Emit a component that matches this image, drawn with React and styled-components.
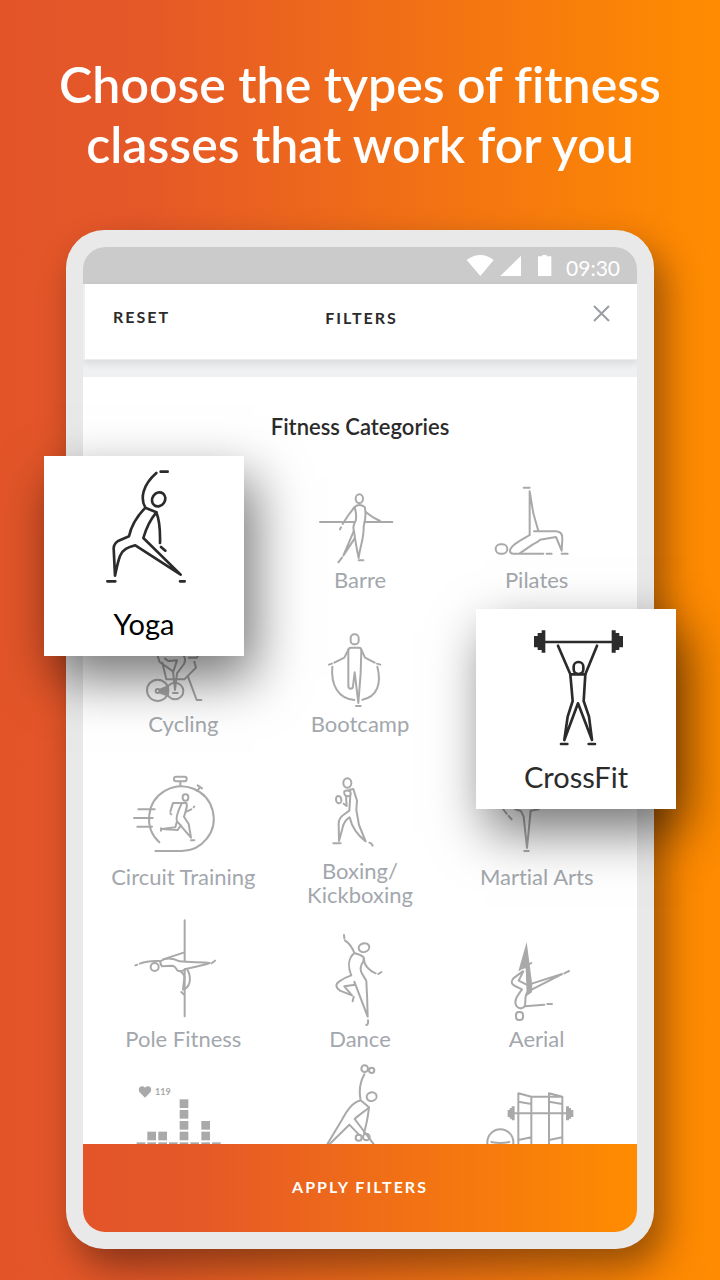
import React from "react";
import styled, { createGlobalStyle } from "styled-components";

const gradient = "linear-gradient(90deg, #e35529 0%, #e55828 20%, #ff8c00 100%)";

const GlobalStyle = createGlobalStyle`
  *, *::before, *::after { box-sizing: border-box; }
  body {
    margin: 0;
    font-family: Lato, "Liberation Sans", sans-serif;
    font-variant-ligatures: none;
  }
  button {
    margin: 0;
    padding: 0;
    border: 0;
    background: none;
    color: inherit;
    font: inherit;
    cursor: pointer;
  }
`;

const Page = styled.main`
  min-height: 100vh;
  padding: 54px 66px 31px;
  background: ${gradient};
  overflow: hidden;
`;

const Headline = styled.h1`
  margin: 0 -40px 56px;
  color: #fff;
  font-size: 50px;
  font-weight: 600;
  line-height: 60px;
  text-align: center;
`;

const Phone = styled.div`
  position: relative;
  padding: 17px;
  border-radius: 38px;
  background: #e9e9e9;
  box-shadow: 10px 18px 36px rgba(0, 0, 0, 0.4);
`;

const Screen = styled.div`
  overflow: hidden;
  border-radius: 22px;
  background: #fff;
`;

const StatusBar = styled.div`
  display: flex;
  align-items: center;
  justify-content: flex-end;
  gap: 14px;
  height: 37px;
  padding: 0 17px;
  background: #cbcbcb;
  color: #fff;
  font-size: 21px;
  line-height: 24px;
`;

const StatusTime = styled.time`
  padding-top: 4px;
`;

const NavBar = styled.header`
  position: relative;
  display: grid;
  grid-template-columns: 1fr auto 1fr;
  align-items: center;
  height: 76px;
  padding: 0 27px 10px 28px;
  border-left: 2px solid #efefef;
  border-bottom: 1px solid #ececec;
  background: #fff;
  box-shadow: 0 3px 8px rgba(0, 0, 0, 0.1);
  color: #2b2b2b;
`;

const NavTitle = styled.h2`
  margin: 0;
  padding-top: 2px;
  font-size: 16px;
  font-weight: 700;
  letter-spacing: 2px;
`;

const ResetButton = styled.button`
  justify-self: start;
  font-size: 16px;
  font-weight: 700;
  letter-spacing: 2px;
`;

const CloseButton = styled.button`
  justify-self: end;
  display: flex;
  padding-bottom: 6px;
`;

const Categories = styled.section`
  border-top: 17px solid #eff0f2;
  padding: 37px 12px 0;
`;

const SectionTitle = styled.h3`
  margin: 0 0 20px;
  color: #2b2b2b;
  font-size: 22px;
  font-weight: 600;
  line-height: 26px;
  text-align: center;
`;

const Grid = styled.div`
  display: grid;
  grid-template-columns: repeat(3, 1fr);
  row-gap: 12px;
  align-items: start;
`;

const Tile = styled.button`
  grid-column: ${(p) => p.$column};
  display: flex;
  flex-direction: column;
  align-items: center;
  color: #a3a7ad;
  font-size: 22px;
  line-height: 24px;
  white-space: pre-line;
`;

const Drawing = styled.svg`
  display: block;
  fill: none;
  stroke: ${(p) => (p.$dark ? "#2b2b2b" : "#a9a9a9")};
  stroke-width: ${(p) => (p.$dark ? 8 : 6)};
  stroke-linecap: round;
  stroke-linejoin: round;

  .solid {
    fill: ${(p) => (p.$dark ? "#2b2b2b" : "#a9a9a9")};
    stroke: none;
  }
`;

const ApplyButton = styled.button`
  display: block;
  width: 100%;
  height: 88px;
  padding-bottom: 4px;
  background: ${gradient};
  color: #fff;
  font-size: 16px;
  font-weight: 700;
  letter-spacing: 2px;
`;

const FeaturedCard = styled.button`
  position: absolute;
  top: ${(p) => p.$top}px;
  ${(p) => p.$side}: -22px;
  display: flex;
  flex-direction: column;
  align-items: center;
  width: 200px;
  height: 200px;
  background: #fff;
  box-shadow: 10px 22px 50px rgba(0, 0, 0, 0.55);
  color: ${(p) => p.$ink};
  font-size: 29px;
  line-height: 36px;
`;

const categories = [
  {
    name: "Barre",
    column: 2,
    box: "-84 -30",
    height: 108,
    art: (
      <>
        <ellipse cx="178" cy="86" rx="11" ry="13" />
        <path d="M60 156H162M193 156H277" />
        <path d="M164 111Q178 99 194 111C199 130 195 155 191 170C192 205 180 230 176 264C171 240 166 215 163 190C158 172 160 166 167 152C171 138 168 126 164 111Q146 132 128 162M123 172L120 178" />
        <path d="M197 126Q216 142 240 153M162 182L130 257L164 205M126 263L115 277M176 271H190" />
      </>
    ),
  },
  {
    name: "Pilates",
    column: 3,
    box: "-33 -30",
    height: 108,
    art: (
      <>
        <rect x="107" y="223" width="35" height="28" rx="14" />
        <path d="M209 195V64L220 130L235 183M191 53H209" />
        <path d="M209 195C182 211 151 226 150 243Q150 251 160 251H250M222 184H288Q308 185 307 206L305 242L288 201L240 209L235 214C210 226 196 240 180 249" />
        <path d="M260 251H275M305 251H323" />
      </>
    ),
  },
  {
    name: "Cycling",
    column: 1,
    box: "16 -138",
    height: 108,
    art: (
      <>
        <circle cx="204" cy="121" r="32" />
        <circle cx="256" cy="123" r="25" />
        <circle cx="204" cy="123" r="6" />
        <path className="solid" d="M207 117L238 105V141L207 130Z" />
        <path d="M218 38L230 88H284L319 53L314 35M295 80L321 150H335" />
        <path d="M204 18L210 36L250 64L256 120L262 70L283 42Q290 25 281 16M226 26L236 33L262 31L252 62M250 129H264M298 23H322L326 14" />
      </>
    ),
  },
  {
    name: "Bootcamp",
    column: 2,
    box: "-84 402",
    height: 108,
    art: (
      <>
        <rect x="152" y="493" width="24" height="30" rx="11" />
        <path d="M184 540Q184 533 176 533H153Q145 533 145 541V648Q145 656 152 656Q159 656 159 648L164 607L175 699L182 610Z" />
        <path d="M145 539L133 563L103 578M96 581L87 584M184 539L195 563L224 578M231 581L241 584" />
        <path d="M97 590C92 645 115 686 163 690M232 590C245 640 232 681 187 689M168 708H182" />
      </>
    ),
  },
  {
    name: "Circuit Training",
    column: 1,
    box: "16 294",
    height: 117,
    art: (
      <>
        <path d="M197 603H273A97 97 0 1 0 209 577" />
        <rect x="253" y="380" width="38" height="14" rx="6" />
        <path d="M272 395V407M323 423L331 411M324 406L337 415M146 478H195M133 504H189M143 530H187" />
        <rect x="279" y="433" width="17" height="19" rx="8" />
        <path d="M242 485L250 459H290Q294 468 289 480L283 500L297 522L304 563L273 527L264 540L217 537L257 532L262 514C256 500 268 480 276 460M262 514L275 528" />
        <path d="M290 485L305 478M312 472L314 470M242 490L245 493M214 535V542M304 571H314" />
      </>
    ),
  },
  {
    name: "Boxing/\nKickboxing",
    column: 2,
    box: "-54 -36",
    height: 111,
    art: (
      <>
        <ellipse cx="172" cy="69" rx="12" ry="14" />
        <ellipse cx="146" cy="119" rx="8" ry="11" transform="rotate(-10 146 119)" />
        <path d="M163 94Q172 88 181 95Q185 108 174 109Q160 108 163 94ZM177 90L190 87L201 122L199 150L207 195L227 244C203 226 186 204 179 172C164 180 160 190 157 206L147 243L146 190Q147 174 160 165L178 152L181 106" />
        <path d="M168 108L170 138L161 131M130 250H152M238 248L243 250L248 257" />
      </>
    ),
  },
  {
    name: "Martial Arts",
    column: 3,
    box: "-33 384",
    height: 117,
    art: (
      <path d="M120 556L140 581M146 588L155 598M166 568L183 573L191 590L201 684L212 572L236 568M193 693H206" />
    ),
  },
  {
    name: "Pole Fitness",
    column: 1,
    box: "-14 42",
    height: 108,
    art: (
      <>
        <path d="M255 46V168M255 192V334" />
        <circle cx="165" cy="186" r="12" />
        <path d="M107 181L113 179M121 176C140 167 160 167 182 168M190 163L252 143M336 175L346 167" />
        <path d="M183 168C198 158 220 159 240 169C270 173 300 171 330 174C305 183 280 187 258 192C250 198 240 200 233 196Q225 182 217 182L187 184Q180 176 183 168Z" />
        <path d="M262 192C276 215 272 240 258 250L250 254L253 226Q258 210 243 199M245 261L252 268" />
      </>
    ),
  },
  {
    name: "Dance",
    column: 2,
    box: "-54 42",
    height: 108,
    art: (
      <>
        <ellipse cx="222" cy="128" rx="16" ry="13" transform="rotate(-15 222 128)" />
        <path d="M162 90L163 100M165 106C178 115 188 130 193 144C200 146 213 150 220 156Q225 162 215 178C204 200 224 214 229 228Q232 280 233 335L193 230L195 239L163 244L186 271L150 257Q130 243 147 230Q162 218 184 211C175 190 172 162 193 144" />
        <path d="M221 160C222 180 237 198 257 205M265 207L274 201M191 275L188 289M234 346Q236 358 229 360" />
      </>
    ),
  },
  {
    name: "Aerial",
    column: 3,
    box: "-33 42",
    height: 108,
    art: (
      <>
        <path className="solid" d="M200 111L217 240L216 262L200 273L197 190L188 192L175 199Z" />
        <path d="M188 199L160 220Q148 235 165 243L186 253C170 275 160 288 170 304Q182 316 194 304C199 290 192 275 202 262M176 227L190 199M176 227L198 238M204 180L214 174" />
        <path d="M215 236L306 207L215 254M313 205L327 198M194 304L253 299M262 297H276" />
        <rect x="168" y="321" width="21" height="24" rx="9" />
      </>
    ),
  },
  {
    label: "Heart Rate Training",
    column: 1,
    box: "-14 474",
    height: 81,
    art: (
      <>
        <path
          className="solid"
          d="M136 578L120 562C112 550 124 536 136 548C148 536 160 550 152 562Z"
        />
        <text className="solid" x="166" y="569" fontSize="27" fontWeight="700">
          119
        </text>
        {[
          [143, 680], [176, 680], [240, 583], [240, 615], [240, 648], [240, 680],
          [305, 648], [305, 680], [111, 712], [143, 712], [176, 712], [208, 712],
          [240, 712], [272, 712], [305, 712], [337, 712],
        ].map(([x, y]) => (
          <rect key={`${x}-${y}`} className="solid" x={x} y={y} width="26" height="26" />
        ))}
      </>
    ),
  },
  {
    label: "Strength",
    column: 2,
    box: "-54 474",
    height: 81,
    art: (
      <>
        <circle cx="224" cy="491" r="10" />
        <circle cx="245" cy="496" r="8" />
        <ellipse cx="245" cy="575" rx="15" ry="13" transform="rotate(-15 245 575)" />
        <path d="M223 508C208 535 207 562 212 586L237 607C222 622 206 629 194 642L256 724M212 586C180 595 165 628 156 644L108 724M112 724L178 659L206 688M237 607Q232 650 222 684" />
        <circle cx="206" cy="698" r="9" />
        <circle cx="229" cy="696" r="10" />
      </>
    ),
  },
  {
    label: "Gym",
    column: 3,
    box: "-33 474",
    height: 81,
    art: (
      <>
        <path d="M175 724V565L214 575V724M267 724V565L307 575V724M214 575H307M175 590L214 597M267 590L307 597M175 705L214 697M267 705L307 697M160 625H320" />
        <path
          className="solid"
          d="M143 615H149V609H155V604H164V646H155V641H149V636H143ZM340 615H333V609H327V604H318V646H327V641H333V636H340Z"
        />
        <circle cx="121" cy="712" r="39" />
        <path d="M94 711Q121 717 148 711" />
      </>
    ),
  },
];

export default function App() {
  return (
    <>
      <GlobalStyle />
      <Page>
        <Headline>
          Choose the types of fitness
          <br />
          classes that work for you
        </Headline>
        <Phone>
          <Screen>
            <StatusBar>
              <svg width="86" height="24" viewBox="318 102 258 72" fill="#fff" aria-hidden="true">
                <path d="M320 120Q361 90 401 120L361 168Z" />
                <path d="M421 168L483 107V168Z" />
                <path d="M534 109H547V105H560V109H574V168H534Z" />
              </svg>
              <StatusTime>09:30</StatusTime>
            </StatusBar>
            <NavBar>
              <ResetButton type="button">RESET</ResetButton>
              <NavTitle>FILTERS</NavTitle>
              <CloseButton type="button" aria-label="Close">
                <svg width="17" height="17" viewBox="0 0 17 17" stroke="#9a9ea4" strokeWidth="2">
                  <path d="M1 1L16 16M16 1L1 16" />
                </svg>
              </CloseButton>
            </NavBar>
            <Categories>
              <SectionTitle>Fitness Categories</SectionTitle>
              <Grid>
                {categories.map(({ name, label, column, box, height, art }) => (
                  <Tile key={name || label} type="button" $column={column} aria-label={label}>
                    <Drawing
                      width="176"
                      height={height}
                      viewBox={`${box} 528 ${height * 3}`}
                      aria-hidden="true"
                    >
                      {art}
                    </Drawing>
                    {name}
                  </Tile>
                ))}
              </Grid>
            </Categories>
            <ApplyButton type="button">APPLY FILTERS</ApplyButton>
          </Screen>

          <FeaturedCard type="button" $side="left" $top={226} $ink="#000">
            <Drawing $dark width="200" height="150" viewBox="12 18 600 450" aria-hidden="true">
              <path d="M349 69C308 105 300 145 316 173L349 187C330 210 318 236 310 264L422 374L286 286C262 293 249 297 240 318C232 340 229 360 225 377L221 295Q222 280 236 272L267 259C274 225 290 200 316 173" />
              <path d="M349 187C359 212 361 240 360 279M363 291L376 302M362 65H383M202 394H226M420 394H434" />
              <ellipse cx="356" cy="148" rx="19" ry="22" transform="rotate(35 356 148)" />
            </Drawing>
            Yoga
          </FeaturedCard>
          <FeaturedCard type="button" $side="right" $top={379} $ink="#2b2b2b">
            <Drawing $dark width="200" height="150" viewBox="48 -33 600 450" aria-hidden="true">
              <path d="M252 66H458M294 77L331 163M411 77L376 163M303 372H322M386 372H405" />
              <path
                className="solid"
                d="M222 48H233V39H245V31H256V98H245V90H233V82H222ZM489 48H478V39H467V31H455V98H467V90H478V82H489Z"
              />
              <rect x="341" y="126" width="29" height="36" rx="14" />
              <path d="M331 163H376L371 243L387 290L396 360L354 250L313 360L323 290L338 243Z" />
            </Drawing>
            CrossFit
          </FeaturedCard>
        </Phone>
      </Page>
    </>
  );
}
